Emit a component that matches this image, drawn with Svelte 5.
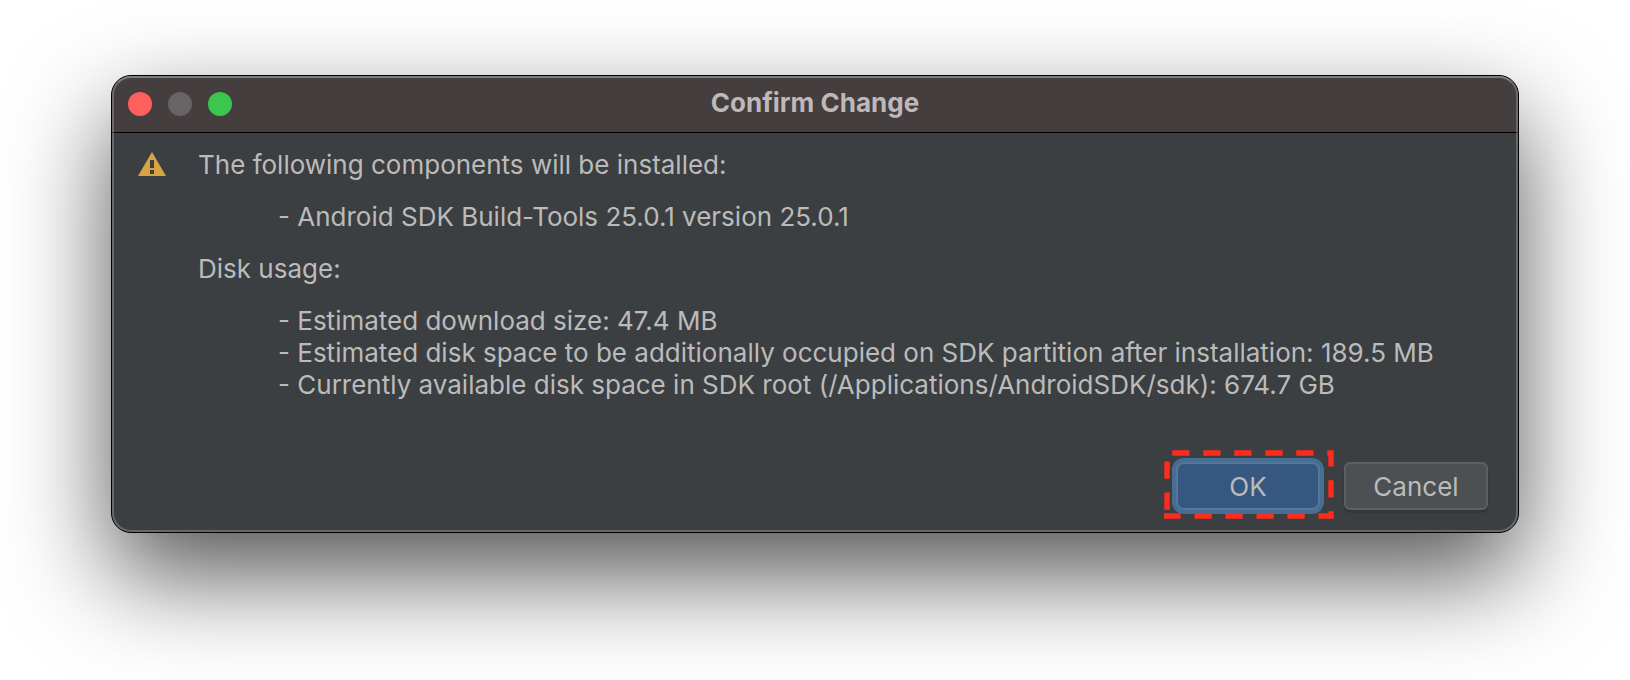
<script>
  const components = ['Android SDK Build-Tools 25.0.1 version 25.0.1'];
  const usage = [
    'Estimated download size: 47.4 MB',
    'Estimated disk space to be additionally occupied on SDK partition after installation: 189.5 MB',
    'Currently available disk space in SDK root (/Applications/AndroidSDK/sdk): 674.7 GB'
  ];
</script>

<main class="desktop">
  <div class="window" role="dialog" aria-labelledby="dialog-title">
    <header class="titlebar">
      <div class="lights">
        <button class="light close" aria-label="Close"></button>
        <button class="light minimize" aria-label="Minimize" disabled></button>
        <button class="light zoom" aria-label="Zoom"></button>
      </div>
      <h1 id="dialog-title">Confirm Change</h1>
    </header>

    <div class="content">
      <div class="message">
        <svg class="warning" width="28" height="24" viewBox="0 0 28 24" aria-hidden="true">
          <path d="M14 0 28 24H0Z" fill="#d9a343" />
          <path d="M12 8h4v8h-4zM12 18h4v4h-4z" fill="#3c3f41" />
        </svg>
        <div class="text">
          <p>The following components will be installed:</p>
          <ul>
            {#each components as item}<li>- {item}</li>{/each}
          </ul>
          <p>Disk usage:</p>
          <ul>
            {#each usage as item}<li>- {item}</li>{/each}
          </ul>
        </div>
      </div>

      <footer class="actions">
        <div class="highlighted">
          <button class="btn primary">OK</button>
          <svg class="marker" width="170" height="70" viewBox="0 0 170 70" aria-hidden="true">
            <g fill="none" stroke="#ff2c1e" stroke-width="5.4" stroke-dasharray="17.2 13.8">
              <path d="M8.3 4H167V67H0" />
              <path d="M3 60.7V4" />
            </g>
          </svg>
        </div>
        <button class="btn">Cancel</button>
      </footer>
    </div>
  </div>
</main>

<style>
  :global(body) {
    background: #fff;
  }
  .desktop {
    box-sizing: border-box;
    min-height: 100vh;
    padding: 75px 111px 147px;
    overflow: hidden;
    font-family: Inter, 'Liberation Sans', sans-serif;
    font-size: 26px;
    line-height: 32px;
    color: #bbb;
  }
  .window {
    position: relative;
    border: 1px solid #000;
    border-radius: 20px;
    background: #3c3f41;
    box-shadow: 0 42px 100px rgba(0, 0, 0, 0.67);
  }
  .window::after {
    content: '';
    position: absolute;
    inset: 0;
    border: 2px solid rgba(255, 255, 255, 0.22);
    border-top-color: rgba(255, 255, 255, 0.32);
    border-radius: 19px;
    pointer-events: none;
  }
  .titlebar {
    display: grid;
    grid-template-columns: 1fr auto 1fr;
    align-items: center;
    height: 56px;
    padding: 0 16px;
    border-bottom: 1px solid #000;
    border-radius: 19px 19px 0 0;
    background: #443e3f;
  }
  .lights {
    display: flex;
    gap: 16px;
  }
  .light {
    width: 24px;
    height: 24px;
    padding: 0;
    border: 0;
    border-radius: 50%;
  }
  .close {
    background: #ff605c;
  }
  .minimize {
    background: #686364;
  }
  .zoom {
    background: #3dc64f;
  }
  h1 {
    margin: 0;
    padding-bottom: 2px;
    font-size: 26px;
    font-weight: 700;
    color: #bfb8b9;
  }
  .content {
    padding: 16px 30px 22px 26px;
  }
  .message {
    display: flex;
    gap: 32px;
  }
  .warning {
    flex: none;
    margin-top: 3px;
  }
  .text {
    display: grid;
    gap: 20px;
  }
  p,
  ul {
    margin: 0;
    padding: 0;
  }
  ul {
    padding-left: 80px;
    list-style: none;
  }
  .actions {
    display: flex;
    justify-content: flex-end;
    gap: 24px;
    margin-top: 61px;
  }
  .highlighted {
    position: relative;
  }
  .marker {
    position: absolute;
    top: -13px;
    left: -12px;
    pointer-events: none;
  }
  .btn {
    display: block;
    min-width: 144px;
    height: 48px;
    padding: 2px 16px 0;
    border: 2px solid #5e6060;
    border-radius: 6px;
    background: #4c5052;
    box-shadow: 0 3px 2px rgba(0, 0, 0, 0.14);
    font: inherit;
    color: #bbb;
  }
  .primary {
    border-color: #537699;
    border-radius: 8px;
    background: #365880;
    box-shadow: 0 0 0 4px #466d94;
  }
</style>
